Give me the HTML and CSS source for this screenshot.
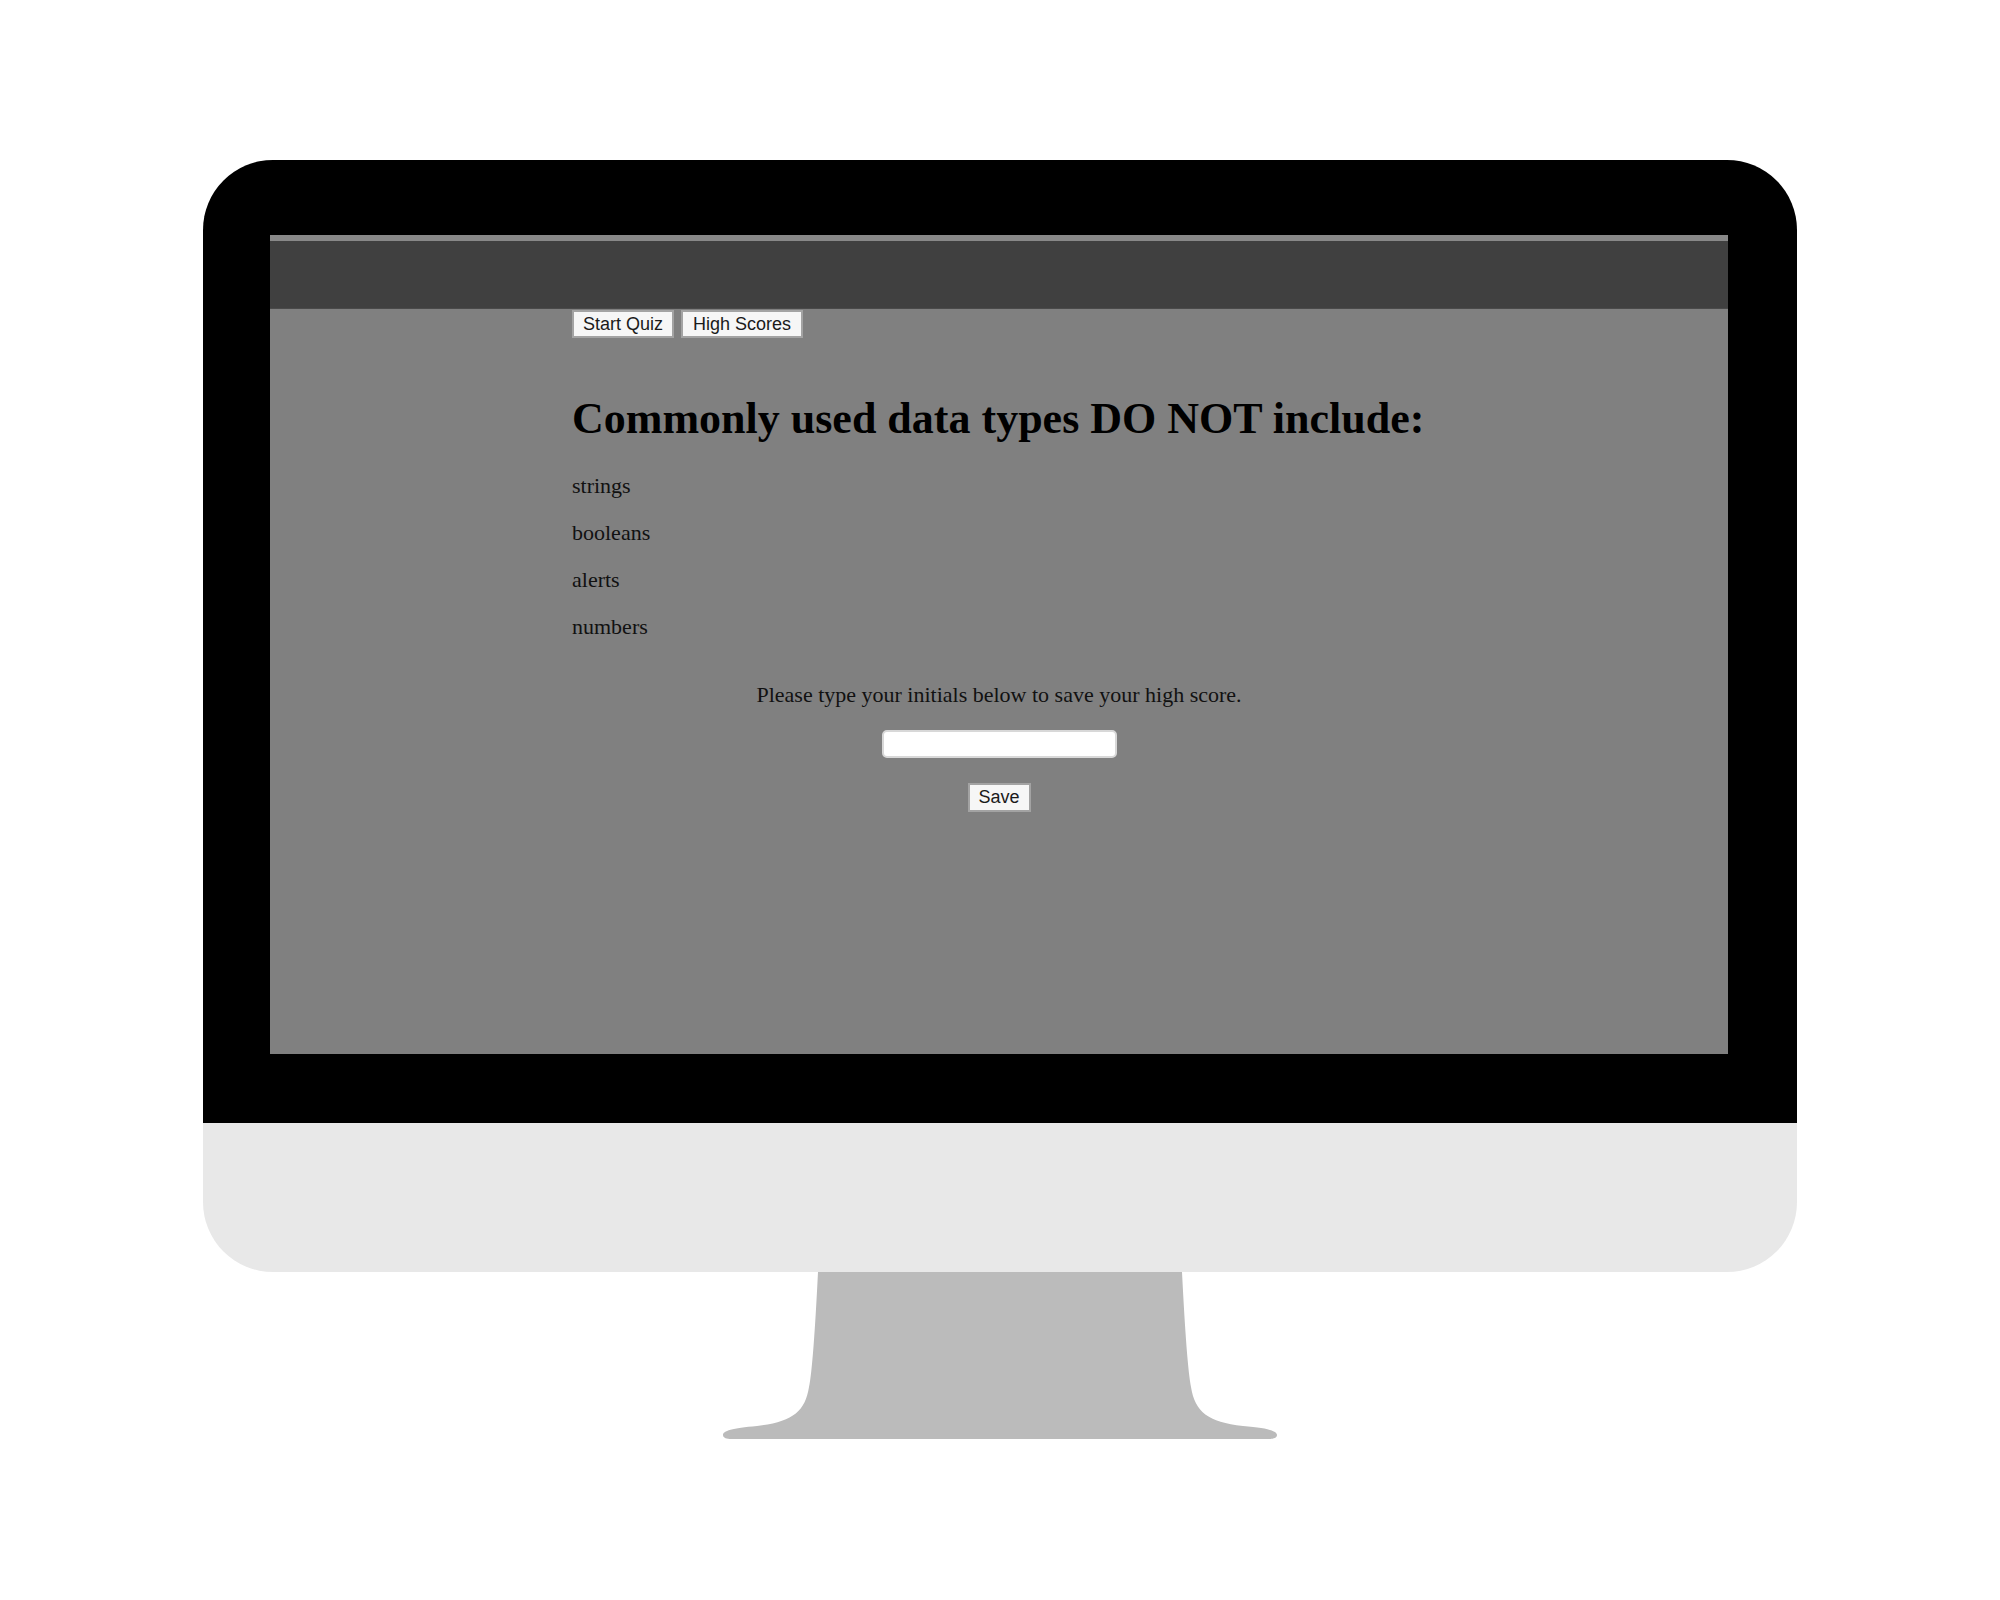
FILE: index.html
```html
<!DOCTYPE html>
<html lang="en">
<head>
<meta charset="utf-8">
<title>Quiz</title>
<link rel="stylesheet" href="styles.css">
</head>
<body>
<div class="stage">
  <div class="monitor">
    <div class="frame">
      <div class="screen">
        <div class="topline"></div>
        <div class="header"></div>
        <div class="content">
          <div class="nav">
            <button class="btn btn-start">Start Quiz</button>
            <button class="btn btn-scores">High Scores</button>
          </div>
          <h1 class="question">Commonly used data types DO NOT include:</h1>
          <ul class="answers">
            <li>strings</li>
            <li>booleans</li>
            <li>alerts</li>
            <li>numbers</li>
          </ul>
        </div>
        <div class="save-area">
          <p class="prompt">Please type your initials below to save your high score.</p>
          <input class="initials" type="text">
          <button class="btn btn-save">Save</button>
        </div>
      </div>
    </div>
    <div class="chin"></div>
    <svg class="stand" width="554" height="167" viewBox="0 0 554 167">
      <path d="M95,0 L459,0 C462,60 465,100 468,115 C472,140 485,150 520,154 C545,156 554,159 554,163 C554,166 550,167 546,167 L8,167 C4,167 0,166 0,163 C0,159 9,156 34,154 C69,150 82,140 86,115 C89,100 92,60 95,0 Z" fill="#bbbbbb"/>
    </svg>
  </div>
</div>
</body>
</html>
```

FILE: styles.css
```css
* { box-sizing: border-box; }
html, body { margin: 0; padding: 0; background: #ffffff; }
.stage {
  width: 2000px;
  height: 1600px;
  padding-top: 160px;
  display: flex;
  justify-content: center;
}
.monitor {
  width: 1594px;
  display: flex;
  flex-direction: column;
  align-items: center;
}
.frame {
  width: 1594px;
  height: 963px;
  background: #000000;
  border-radius: 70px 70px 0 0;
  padding: 75px 69px 69px 67px;
}
.screen {
  width: 1458px;
  height: 819px;
  background: #808080;
  overflow: hidden;
  font-family: "Liberation Serif", "Times New Roman", serif;
  color: #111111;
}
.topline { height: 6px; background: #888888; }
.header { height: 68px; background: #404040; border-bottom: 1px solid #4a4a4a; }
.content {
  padding-left: 302px;
  padding-top: 1px;
}
.nav { display: flex; gap: 7px; }
.btn {
  font-family: "Liberation Sans", Arial, sans-serif;
  font-size: 18px;
  color: #1a1a1a;
  background: #f6f6f6;
  border: 2px solid #a3a3a3;
  height: 28px;
  padding: 0;
  margin: 0;
  line-height: 24px;
  text-align: center;
}
.btn-start { width: 102px; }
.btn-scores { width: 122px; }
.question {
  margin: 56px 0 0 0;
  font-size: 44px;
  line-height: 50px;
  font-weight: bold;
  color: #000000;
}
.answers {
  list-style: none;
  margin: 18px 0 0 0;
  padding: 0;
  font-size: 22px;
  line-height: 47px;
}
.save-area {
  display: flex;
  flex-direction: column;
  align-items: center;
  padding-top: 30px;
}
.prompt {
  margin: 0;
  font-size: 22px;
  line-height: 30px;
}
.initials {
  margin-top: 20px;
  width: 235px;
  height: 28px;
  background: #ffffff;
  border: 2px solid #d8d8d8;
  border-radius: 5px;
  outline: none;
}
.btn-save {
  margin-top: 25px;
  width: 63px;
  height: 29px;
  line-height: 25px;
}
.chin {
  width: 1594px;
  height: 149px;
  background: #e8e8e8;
  border-radius: 0 0 70px 70px;
}
.stand { display: block; }
```
